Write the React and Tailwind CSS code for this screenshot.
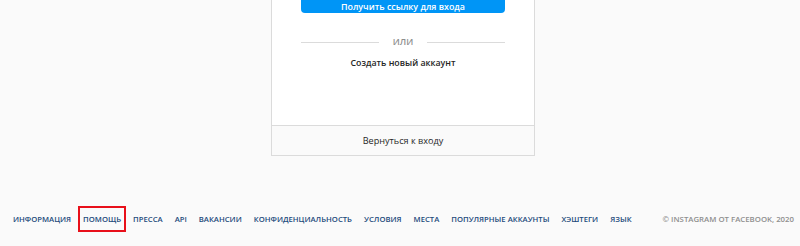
export default function App() {
  const links = [
    "Информация",
    "Помощь",
    "Пресса",
    "API",
    "Вакансии",
    "Конфиденциальность",
    "Условия",
    "Места",
    "Популярные аккаунты",
    "Хэштеги",
    "Язык",
  ];
  return (
    <div className="w-[800px] h-[246px] bg-[#fafafa] flex flex-col overflow-hidden font-['Open_Sans',sans-serif]">
      <main className="flex justify-center pl-[6px]">
        <div className="w-[264px] flex flex-col bg-white border border-t-0 border-[#dbdbdb]">
          <div className="px-[29px] h-[125px] flex flex-col">
            <button className="h-[13px] w-full bg-[#0095f6] rounded-b-[4px] text-white text-[8.9px] font-semibold leading-[13px] text-center">
              Получить ссылку для входа
            </button>
            <div className="mt-[22px] h-[14px] flex items-center">
              <div className="flex-1 h-px bg-[#dbdbdb]" />
              <div className="mx-[14px] text-[8.9px] font-semibold text-[#8e8e8e] leading-[14px] uppercase">или</div>
              <div className="flex-1 h-px bg-[#dbdbdb]" />
            </div>
            <a className="mt-[7px] h-[14px] leading-[14px] text-center text-[8.8px] font-semibold text-[#262626]">
              Создать новый аккаунт
            </a>
          </div>
          <div className="border-t border-[#dbdbdb] bg-[#fafafa] h-[30px] flex items-center justify-center text-[9.1px] text-[#262626]">
            Вернуться к входу
          </div>
        </div>
      </main>
      <footer className="mt-[56px] flex items-center pl-[13px] pr-[6px] h-[14px] whitespace-nowrap">
        <nav className="flex items-center gap-[12px] flex-1">
          {links.map((l) =>
            l === "Помощь" ? (
              <a key={l} className="relative text-[7.7px] font-semibold uppercase text-[#1d4a7c] leading-[14px]">
                {l}
                <span className="absolute -left-[5px] -right-[5px] -top-[6px] -bottom-[6px] border-2 border-[#e8101a]" />
              </a>
            ) : (
              <a key={l} className="text-[7.7px] font-semibold uppercase text-[#1d4a7c] leading-[14px]">
                {l}
              </a>
            )
          )}
        </nav>
        <span className="text-[7.8px] font-semibold uppercase text-[#8e8e8e] leading-[14px]">
          © Instagram от Facebook, 2020
        </span>
      </footer>
    </div>
  );
}
